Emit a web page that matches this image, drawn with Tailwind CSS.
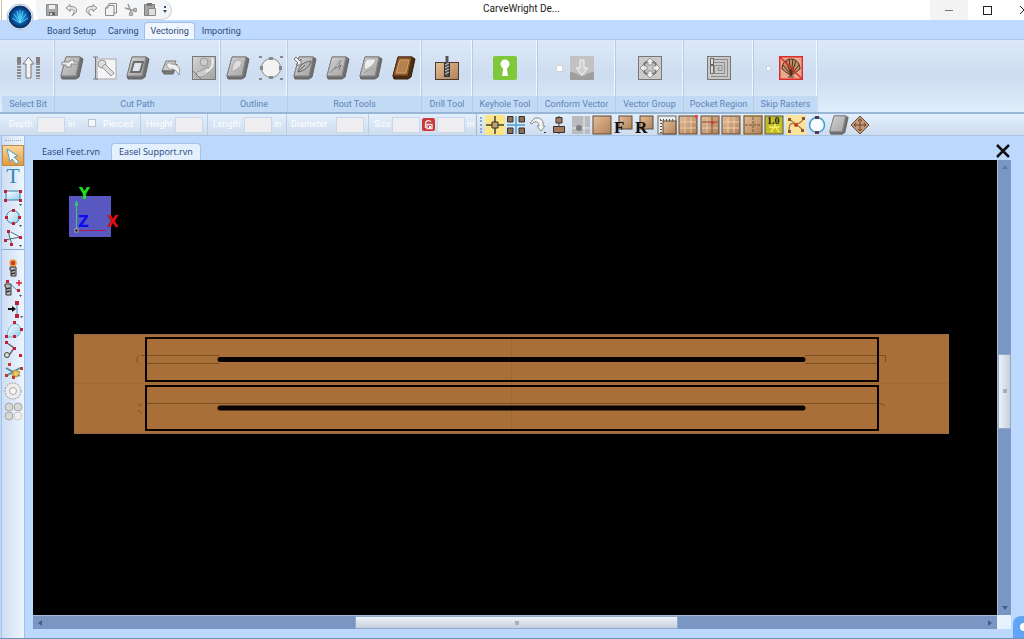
<!DOCTYPE html>
<html lang="en">
<head>
  <meta charset="UTF-8" />
  <meta name="viewport" content="width=device-width, initial-scale=1.0"/>
  <title>CarveWright Designer</title>
  <script src="https://cdn.jsdelivr.net/npm/@tailwindcss/browser@4"></script>
</head>
<body class="h-screen flex flex-col overflow-hidden bg-[#bcd8fc] font-[Roboto,'Noto_Sans',sans-serif] text-[9px] text-[#2c4a78]">

  <!-- Shared icon shapes -->
  <svg class="absolute size-0">
    <defs>
      <linearGradient id="gray" x1="0" y1="0" x2="1" y2="1"><stop offset="0" stop-color="#d4d4d4"/><stop offset="1" stop-color="#a3a3a3"/></linearGradient>
      <linearGradient id="wood" x1="0" y1="0" x2="1" y2="1"><stop offset="0" stop-color="#e4bd97"/><stop offset="1" stop-color="#b08058"/></linearGradient>
      <linearGradient id="sky" x1="0" y1="0" x2="1" y2="1"><stop offset="0" stop-color="#ffffff"/><stop offset="1" stop-color="#8fcdec"/></linearGradient>
      <radialGradient id="orb"><stop offset="0" stop-color="#22b4ee"/><stop offset="0.6" stop-color="#0a5ca8"/><stop offset="1" stop-color="#06265c"/></radialGradient>
      <g id="slab">
        <path d="M6 1H20L23 3L19 21L16 23H2L1 20Z" fill="#707070" stroke="#626262"/>
        <path d="M6 1H20L16 20H1Z" fill="url(#gray)" stroke="#858585"/>
      </g>
      <g id="board"><rect x="1" y="1" width="18" height="18" fill="url(#wood)" stroke="#5e4a3b"/></g>
    </defs>
  </svg>

  <!-- Title bar -->
  <header class="relative h-5 shrink-0 bg-white flex items-center">
    <div class="h-5 ml-9 pl-[10px] pr-1 flex items-center gap-[7px] bg-[#f4f5f6] border-r border-b border-[#d0d0d0] rounded-r-full">
      <button aria-label="Save"><svg class="w-3 h-3 block" viewBox="0 0 12 12"><path d="M0.5 0.5H11.5V11.5H0.5Z" fill="#aaa" stroke="#888"/><path d="M3 1H9V5H3Z" fill="#eee"/><path d="M3 8H9V11H3Z" fill="#666"/><path d="M4 9H6V11H4Z" fill="#ddd"/></svg></button>
      <button aria-label="Undo"><svg class="w-[13px] h-3 block" viewBox="0 0 13 12" fill="#e6e6e6" stroke="#8c8c8c"><path d="M1 4L5 0.5V2.5C13 2 14 8 7 11.5C11 7 9 5 5 5.500V7.500Z"/></svg></button>
      <button aria-label="Redo"><svg class="w-[13px] h-3 block" viewBox="0 0 13 12" fill="#e6e6e6" stroke="#8c8c8c"><path d="M12 4L8 0.5V2.500C0 2 -1 8 6 11.5C2 7 4 5 8 5.500V7.500Z"/></svg></button>
      <button aria-label="Copy"><svg class="w-3 h-[13px] block" viewBox="0 0 12 13" fill="#f2f2f2" stroke="#8c8c8c"><path d="M4 0.5H11.5V10H4Z"/><path d="M0.500 5L3 2.500H9V12.500H0.500ZM0.500 5H3V2.500"/></svg></button>
      <button aria-label="Cut"><svg class="w-[13px] h-3 block" viewBox="0 0 13 12" fill="none" stroke="#9a9a9a" stroke-width="1.500"><path d="M4 0L7 8M1 4L11 7"/><circle cx="7" cy="10" r="1.500"/><circle cx="11" cy="6" r="1.500"/></svg></button>
      <button aria-label="Paste"><svg class="w-3 h-[13px] block" viewBox="0 0 12 13"><path d="M0.500 1.500H10.500V12.500H0.500Z" fill="#a5a5a5" stroke="#7c7c7c"/><path d="M3 0H8V3H3Z" fill="#777"/><path d="M4.500 5.500H11.500V12.500H4.500Z" fill="#ddd" stroke="#888"/></svg></button>
      <button aria-label="Customize"><svg class="w-1 h-2 block" viewBox="0 0 4 8" fill="#304a78"><path d="M1 0H3V2H1ZM0 4H4L2 7Z"/></svg></button>
    </div>
    <h1 class="absolute left-[483px] top-[2px] text-[10px] leading-[14px] text-[#222]">CarveWright De...</h1>
    <div class="absolute right-0 top-0 h-full flex">
      <button class="w-[38px] bg-[#f3f3f3] flex items-center justify-center" aria-label="Minimize"><span class="w-2 h-px bg-[#777]"></span></button>
      <button class="w-[38px] flex items-center justify-center" aria-label="Maximize"><span class="size-[9px] border border-[#222]"></span></button>
      <button class="w-[18px] flex items-center justify-end overflow-hidden" aria-label="Close"><svg class="w-1 h-2" viewBox="0 0 4 8" fill="none" stroke="#222"><path d="M0 0L4 4L0 8"/></svg></button>
    </div>
    <button class="absolute left-0 top-0 z-10 w-10 h-[34px]" aria-label="Application menu">
      <svg class="w-10 h-[34px] block" viewBox="0 0 40 34">
        <path d="M3 20C3 8 8 1 20 1C30 1 35 8 38 20Z" fill="#fff"/>
        <path d="M0 1H1V20H2V0" fill="#c8c4a8"/>
        <circle cx="20" cy="17" r="13" fill="#dfe9f5" stroke="#b8c6da"/>
        <circle cx="20" cy="17" r="11" fill="url(#orb)" stroke="#123b74"/>
        <path d="M20 23L14 14M20 23L17 11M20 23V10M20 23L23 11M20 23L26 14M20 23L12 18M20 23L28 18" stroke="#6fe0ff" stroke-width="0.800" fill="none"/>
      </svg>
    </button>
  </header>

  <!-- Ribbon tabs -->
  <nav class="h-5 shrink-0 pl-[41px] flex items-end bg-[#bfdafe] border-b border-[#a6c6ea] leading-4">
    <a href="#" class="px-[6px]">Board Setup</a>
    <a href="#" class="px-[6px]">Carving</a>
    <a href="#" class="px-[5px] bg-[#eff6ff] border border-b-0 border-[#9fbfe6] rounded-t-sm">Vectoring</a>
    <a href="#" class="px-[7px]">Importing</a>
  </nav>

  <!-- Ribbon -->
  <section class="h-[74px] shrink-0 pl-[2px] flex border-b-2 border-[#98b6d6] bg-linear-to-b from-[#dde9f8] via-[#cddcf0] to-[#e0eefc] text-[#5d84bb]">
    <div class="w-[53px] flex flex-col border-r border-[#b4cbe6] shadow-[inset_-1px_0_#f0f7ff]">
      <div class="flex-1 flex items-center justify-center">
        <button aria-label="Select Bit"><svg class="w-[25px] h-6 block" viewBox="0 0 25 24"><g stroke="#8a8a8a" stroke-width="4" stroke-dasharray="2 1" fill="none"><path d="M3 1V23M22 1V23"/></g><path d="M1 1H5V7H1ZM20 1H24V7H20Z" fill="#808080"/><path d="M12.500 1L18 8H15V22H10V8H7Z" fill="#f2f2f2" stroke="#777"/></svg></button>
      </div>
      <p class="h-4 bg-[#c3daf4] text-center leading-4">Select Bit</p>
    </div>
    <div class="w-[166px] flex flex-col border-r border-[#b4cbe6] shadow-[inset_-1px_0_#f0f7ff]">
      <div class="flex-1 flex items-center justify-center gap-[9px]">
        <button aria-label="Cut path on board"><svg class="size-6 block" viewBox="0 0 24 24"><use href="#slab"/><path d="M2 6H9L11 4H14V6H18V8H11V11H6V9H2Z" fill="#ececec" stroke="#8a8a8a"/></svg></button>
        <button aria-label="Cut path depth"><svg class="size-6 block" viewBox="0 0 24 24"><rect x="4" y="3" width="19" height="20" fill="#f4f4f4" stroke="#aaa"/><path d="M0 1H5M2.500 1V23M0 23H5" stroke="#777"/><circle cx="9" cy="8" r="4" fill="#ddd" stroke="#999"/><path d="M9 11L12 8L21 17L18 20Z" fill="#ddd" stroke="#999"/></svg></button>
        <button aria-label="Cut out"><svg class="size-6 block" viewBox="0 0 24 24"><use href="#slab"/><path d="M8 6H17L14 16H5Z" fill="#dfe6ee" stroke="#6c6c6c" stroke-width="2"/></svg></button>
        <button aria-label="Cut path bend"><svg class="size-6 block" viewBox="0 0 24 24"><path d="M7 5H17L13 15H3Z" fill="#ccc" stroke="#777"/><path d="M3 15L5 18H14L18 8L13 15Z" fill="#777" stroke="#666"/><path d="M7 9L12 5V8C20 8 22 13 20 19C17 14 15 13 12 13V15Z" fill="#efefef" stroke="#999"/></svg></button>
        <button aria-label="Cut path corner"><svg class="size-6 block" viewBox="0 0 24 24"><rect x="0.500" y="0.500" width="23" height="23" fill="url(#gray)" stroke="#777"/><path d="M4 21C4 13 6 18 15 11L18 14C15 20 9 22 4 21Z" fill="#ccc" stroke="#999"/><circle cx="12" cy="6" r="4" fill="#ccc" stroke="#999"/><path d="M14 16C20 13 22 8 20 2" stroke="#eee" stroke-width="2" fill="none"/><path d="M0 14L9 23" stroke="#777"/></svg></button>
      </div>
      <p class="h-4 bg-[#c3daf4] text-center leading-4">Cut Path</p>
    </div>
    <div class="w-[67px] flex flex-col border-r border-[#b4cbe6] shadow-[inset_-1px_0_#f0f7ff]">
      <div class="flex-1 flex items-center justify-center gap-[9px]">
        <button aria-label="Outline slab"><svg class="size-6 block" viewBox="0 0 24 24"><use href="#slab"/><path d="M6 15C6 8 9 4 13 4C17 5 16 10 11 13L6 16Z" fill="#dedede" stroke="#aaa"/></svg></button>
        <button aria-label="Outline circle"><svg class="size-6 block" viewBox="0 0 24 24"><circle cx="12" cy="12" r="9.500" fill="#f3f3f3" stroke="#888"/><path d="M10 1H14V4H10ZM10 20H14V23H10ZM1 10H4V14H1ZM20 10H23V14H20ZM0 0H3V2H0ZM21 0H24V2H21ZM0 22H3V24H0ZM21 22H24V24H21Z" fill="#888"/></svg></button>
      </div>
      <p class="h-4 bg-[#c3daf4] text-center leading-4">Outline</p>
    </div>
    <div class="w-[134px] flex flex-col border-r border-[#b4cbe6] shadow-[inset_-1px_0_#f0f7ff]">
      <div class="flex-1 flex items-center justify-center gap-[9px]">
        <button aria-label="Rout leaf"><svg class="size-6 block" viewBox="0 0 24 24"><use href="#slab"/><path d="M5 16C6 9 11 6 18 5C16 11 12 15 5 16ZM5 16L12 9" fill="#b4b4b4" stroke="#666"/><path d="M1 3L3 1L7 5L8 3V9H3L5 7Z" fill="#eee" stroke="#777"/></svg></button>
        <button aria-label="Rout line"><svg class="size-6 block" viewBox="0 0 24 24"><use href="#slab"/><path d="M4 17L10 10L15 4L12 11L7 14Z" fill="#efefef" stroke="#888"/><path d="M9 12L15 9L13 14" fill="none" stroke="#777"/></svg></button>
        <button aria-label="Rout shape"><svg class="size-6 block" viewBox="0 0 24 24"><use href="#slab"/><path d="M6 14C4 9 6 3 10 3L17 3C15 10 11 11 6 14Z" fill="#eee" stroke="#aaa"/><path d="M5 17L14 12" stroke="#999"/></svg></button>
        <button aria-label="Rout board"><svg class="size-6 block" viewBox="0 0 24 24"><path d="M6 1H20L23 3L19 21L16 23H2L1 20Z" fill="#4b2c12" stroke="#382010"/><path d="M6 1H20L16 20H1Z" fill="#8b5a2b" stroke="#4b2c12"/><path d="M8 4H17L14 17H4Z" fill="#b5824f" stroke="#d0a06c"/></svg></button>
      </div>
      <p class="h-4 bg-[#c3daf4] text-center leading-4">Rout Tools</p>
    </div>
    <div class="w-[51px] flex flex-col border-r border-[#b4cbe6] shadow-[inset_-1px_0_#f0f7ff]">
      <div class="flex-1 flex items-center justify-center">
        <button aria-label="Drill Tool"><svg class="size-6 block" viewBox="0 0 24 24"><rect x="0.500" y="6.500" width="23" height="17" fill="url(#wood)" stroke="#4c3a2c"/><path d="M9 6H15V21H9Z" fill="#333"/><path d="M12 0V20" stroke="#555" stroke-width="3"/><path d="M10 9L14 7M10 12L14 10M10 15L14 13M10 18L14 16" stroke="#ccc"/></svg></button>
      </div>
      <p class="h-4 bg-[#c3daf4] text-center leading-4">Drill Tool</p>
    </div>
    <div class="w-[65px] flex flex-col border-r border-[#b4cbe6] shadow-[inset_-1px_0_#f0f7ff]">
      <div class="flex-1 flex items-center justify-center">
        <button aria-label="Keyhole Tool"><svg class="size-6 block" viewBox="0 0 24 24"><rect width="24" height="24" rx="2" fill="#7ec83c"/><circle cx="12" cy="8" r="4.500" fill="#fff"/><path d="M10.500 10H13.500L15 20H9Z" fill="#fff"/></svg></button>
      </div>
      <p class="h-4 bg-[#c3daf4] text-center leading-4">Keyhole Tool</p>
    </div>
    <div class="w-[78px] flex flex-col border-r border-[#b4cbe6] shadow-[inset_-1px_0_#f0f7ff]">
      <div class="flex-1 flex items-center justify-center gap-[7px] pr-[3px]">
        <input type="checkbox" aria-label="Conform" class="appearance-none size-[7px] bg-white border border-[#d0d4da]">
        <button aria-label="Conform Vector"><svg class="size-6 block" viewBox="0 0 24 24"><rect width="24" height="24" rx="1" fill="#c2c2c2"/><path d="M0 16C7 16 8 20 12 20C16 20 17 16 24 16V24H0Z" fill="#9e9e9e"/><path d="M10 4H14V12H18L12 19L6 12H10Z" fill="#cfcfcf" stroke="#f6f6f6"/></svg></button>
      </div>
      <p class="h-4 bg-[#c3daf4] text-center leading-4">Conform Vector</p>
    </div>
    <div class="w-[68px] flex flex-col border-r border-[#b4cbe6] shadow-[inset_-1px_0_#f0f7ff]">
      <div class="flex-1 flex items-center justify-center">
        <button aria-label="Vector Group"><svg class="size-6 block" viewBox="0 0 24 24"><rect x="0.500" y="0.500" width="23" height="23" fill="#cbcbcb" stroke="#777"/><circle cx="12" cy="12" r="7" fill="none" stroke="#777" stroke-width="2"/><path d="M12 2L16 6H14V9H10V6H8ZM12 22L8 18H10V15H14V18H16ZM2 12L6 8V10H9V14H6V16ZM22 12L18 16V14H15V10H18V8Z" fill="#eee" stroke="#777" stroke-width="0.700"/></svg></button>
      </div>
      <p class="h-4 bg-[#c3daf4] text-center leading-4">Vector Group</p>
    </div>
    <div class="w-[70px] flex flex-col border-r border-[#b4cbe6] shadow-[inset_-1px_0_#f0f7ff]">
      <div class="flex-1 flex items-center justify-center">
        <button aria-label="Pocket Region"><svg class="size-6 block" viewBox="0 0 24 24"><rect x="0.500" y="0.500" width="23" height="23" fill="#c8c8c8" stroke="#777"/><path d="M7 3.500H20.500V20.500H4M7 6.500H17.500V17.500H7.500V9.500H15V14.500H11V12H13" fill="none" stroke="#8b8b8b"/><path d="M3.500 2.500H6.500V17.500H3.500Z" fill="#ddd" stroke="#666"/><path d="M4 8H7V10H4Z" fill="#666"/></svg></button>
      </div>
      <p class="h-4 bg-[#c3daf4] text-center leading-4">Pocket Region</p>
    </div>
    <div class="w-[64px] flex flex-col border-r border-[#c8dbf0] shadow-[inset_-1px_0_#f0f7ff]">
      <div class="flex-1 flex items-center justify-center gap-[8px] pr-[2px]">
        <input type="checkbox" aria-label="Skip" class="appearance-none size-[5px] bg-white border border-[#d0d4da]">
        <button aria-label="Skip Rasters"><svg class="size-6 block" viewBox="0 0 24 24"><rect x="0.750" y="0.750" width="22.500" height="22.500" fill="#e9a98f" stroke="#dc2f2b" stroke-width="1.500"/><path d="M12 20L3 13C3 6 8 3 12 3C16 3 21 6 21 13Z" fill="#c39068" stroke="#4e2b1b"/><path d="M12 19L4 9M12 19L7 5M12 19L10 3M12 19L14 3M12 19L17 5M12 19L20 9M9 21H15" stroke="#4e2b1b" fill="none"/><path d="M1 1L23 23" stroke="#e32b2b" stroke-width="1.500"/></svg></button>
      </div>
      <p class="h-4 bg-[#c3daf4] text-center leading-4">Skip Rasters</p>
    </div>
  </section>

  <!-- Property bar -->
  <section class="h-[22px] shrink-0 flex items-center border-b border-[#a9c4e2] bg-linear-to-b from-[#e3effc] to-[#cddcee] text-white">
    <div class="ml-[2px] w-[475px] h-full pl-[7px] flex items-center border-r border-[#9db8d8]">
      <label for="depth" class="w-7">Depth</label>
      <input id="depth" type="text" class="w-7 h-4 bg-[#eeeef0] border border-[#c9d8ea]">
      <span class="w-[23px] pl-[3px]">in</span>
      <input id="pierced" type="checkbox" class="appearance-none size-2 mb-1 bg-[#f6f6f6] border border-[#b8c4d2]">
      <label for="pierced" class="w-11 pl-[7px]">Pierced</label>
      <label for="height" class="w-[35px] h-full pl-[5px] flex items-center border-l border-[#b7cde8]">Height</label>
      <input id="height" type="text" class="w-7 h-4 bg-[#eeeef0] border border-[#c9d8ea]">
      <label for="length" class="w-[37px] h-full ml-1 pl-[5px] flex items-center border-l border-[#b7cde8]">Length</label>
      <input id="length" type="text" class="w-7 h-4 bg-[#eeeef0] border border-[#c9d8ea]">
      <span class="w-[14px] pl-[2px]">in</span>
      <label for="diameter" class="w-[50px] h-full pl-[4px] flex items-center border-l border-[#b7cde8]">Diameter</label>
      <input id="diameter" type="text" class="w-7 h-4 bg-[#eeeef0] border border-[#c9d8ea]">
      <label for="size" class="w-[24px] h-full ml-1 pl-[5px] flex items-center border-l border-[#b7cde8]">Size</label>
      <input id="size" type="text" class="w-7 h-4 bg-[#eeeef0] border border-[#c9d8ea]">
      <button class="mx-[2px]" aria-label="Lock ratio"><svg class="size-[13px] block" viewBox="0 0 13 13"><rect width="13" height="13" rx="2" fill="#c9393c"/><path d="M3.500 10V6C3.500 2 8 2 9 4M5 6.500H10V10.500H5Z" fill="none" stroke="#f6dede" stroke-width="1.300"/><path d="M7 8H9V10H7Z" fill="#fff"/></svg></button>
      <input type="text" aria-label="Size height" class="w-7 h-4 bg-[#eeeef0] border border-[#c9d8ea]">
      <span class="pl-[2px]">in</span>
    </div>
    <div class="ml-[3px] h-4 border-l-2 border-dotted border-[#8ba6c8]"></div>
    <div class="ml-[3px] w-[385px] h-full flex items-center justify-between">
      <button class="bg-[#fbe585]" aria-label="Snap to center"><svg class="size-5 block" viewBox="0 0 20 20"><path d="M10 1V19M1 10H19" stroke="#3d4237" stroke-width="1.500"/><path d="M7 7H13V13H7Z" fill="#c89d69" stroke="#333"/></svg></button>
      <button aria-label="Snap to grid"><svg class="size-5 block" viewBox="0 0 20 20"><path d="M10 1V19M1 10H19" stroke="#4da2cf" stroke-width="1.500"/><path d="M1.500 1.500H7V7H1.500ZM13 1.500H18.500V7H13ZM1.500 13H7V18.500H1.500ZM13 13H18.500V18.500H13Z" fill="#8c6e57" stroke="#333"/></svg></button>
      <button aria-label="Rotate"><svg class="size-5 block" viewBox="0 0 20 20"><path d="M2 8L7 3C14 2 16 7 15 11H17L13 16L9 11H11C11 8 9 6 6 7L4 9Z" fill="#f2f2f2" stroke="#8d8d8d"/><path d="M16 17H18V18H16Z" fill="#333"/></svg></button>
      <button aria-label="Align"><svg class="size-5 block" viewBox="0 0 20 20"><path d="M10 1V19" stroke="#444"/><path d="M7 2.500H13V8H7ZM4.500 11.500H15.500V17.500H4.500Z" fill="#a67b5b" stroke="#333"/></svg></button>
      <button aria-label="Snap point"><svg class="size-5 block" viewBox="0 0 20 20"><rect x="1" y="1" width="18" height="18" fill="#b9bcbf"/><path d="M13 1V19M1 13H19" stroke="#e9e9e9"/><circle cx="8" cy="13" r="3" fill="#7d7f82"/></svg></button>
      <button aria-label="Board"><svg class="size-5 block" viewBox="0 0 20 20"><use href="#board"/></svg></button>
      <button aria-label="Front"><svg class="size-5 block" viewBox="0 0 20 20"><rect x="5" y="1" width="13" height="13" fill="url(#wood)" stroke="#5e4a3b"/><text x="0" y="18" font-family="Liberation Serif" font-weight="700" font-size="17" fill="#111">F</text></svg></button>
      <button aria-label="Rear"><svg class="size-5 block" viewBox="0 0 20 20"><rect x="5" y="1" width="13" height="13" fill="url(#wood)" stroke="#5e4a3b"/><text x="0" y="18" font-family="Liberation Serif" font-weight="700" font-size="17" fill="#111">R</text></svg></button>
      <button aria-label="Rulers"><svg class="size-5 block" viewBox="0 0 20 20"><rect x="1" y="1" width="18" height="18" fill="#ececec" stroke="#666"/><rect x="6" y="6" width="13" height="13" fill="url(#wood)" stroke="#5e4a3b"/><path d="M3 5H18" stroke="#555" stroke-width="2" stroke-dasharray="1 2"/><path d="M4 5V18" stroke="#555" stroke-width="2" stroke-dasharray="1 2"/></svg></button>
      <button aria-label="Grid origin"><svg class="size-5 block" viewBox="0 0 20 20"><use href="#board"/><path d="M7 2V18M13 2V18M2 7H18M2 13H18" stroke="#e6cba9"/><path d="M17 0H20V3H17Z" fill="#e34b4b"/></svg></button>
      <button aria-label="Grid point"><svg class="size-5 block" viewBox="0 0 20 20"><use href="#board"/><path d="M7 2V18M2 13H18" stroke="#e6cba9"/><path d="M12 2V18M2 7H18" stroke="#7c5035"/><path d="M11 6H14V9H11Z" fill="#d93838"/></svg></button>
      <button aria-label="Grid"><svg class="size-5 block" viewBox="0 0 20 20"><use href="#board"/><path d="M7 2V18M13 2V18M2 7H18M2 13H18" stroke="#ecd0b0"/></svg></button>
      <button class="bg-[#f5d26a]" aria-label="Center lines"><svg class="size-5 block" viewBox="0 0 20 20"><use href="#board"/><path d="M10 2V18M2 10H18" stroke="#765238" stroke-dasharray="3 1"/></svg></button>
      <button aria-label="Zoom 1.0"><svg class="size-5 block" viewBox="0 0 20 20"><rect x="1" y="1" width="18" height="18" fill="#c5bd28" stroke="#555"/><text x="3" y="9" font-family="Liberation Serif" font-weight="700" font-size="10" fill="#222">1.0</text><path d="M7 17L11 11L15 17M11 11V9M5 12H16" stroke="#f3ed63" stroke-width="1.500" fill="none"/></svg></button>
      <button class="bg-[#fae39c]" aria-label="Edit nodes"><svg class="size-5 block" viewBox="0 0 20 20"><path d="M3 17C3 0 11 16 18 3M3 4L11 10L17 15" stroke="#b08141" stroke-width="1.500" fill="none"/><path d="M2 3H5V6H2ZM16 2H19V5H16ZM2 15H5V18H2ZM15 14H18V17H15Z" fill="#7d5744"/><circle cx="10" cy="10" r="2" fill="#c9372a"/></svg></button>
      <button aria-label="Circle nodes"><svg class="size-5 block" viewBox="0 0 20 20"><circle cx="10" cy="10" r="7.500" fill="#f7fcff" stroke="#3e9bd1" stroke-width="1.500"/><path d="M8 1H12V4H8ZM8 16H12V19H8Z" fill="#52394f"/></svg></button>
      <button aria-label="Slab"><svg class="size-5 block" viewBox="0 0 24 24"><use href="#slab"/></svg></button>
      <button aria-label="Move"><svg class="size-5 block" viewBox="0 0 20 20"><path d="M10 1L19 10L10 19L1 10Z" fill="#c39a78" stroke="#6a4a34"/><path d="M10 5V15M5 10H15M8 6L10 4L12 6M8 14L10 16L12 14M6 8L4 10L6 12M14 8L16 10L14 12" stroke="#6b4630" fill="none"/></svg></button>
    </div>
  </section>

  <!-- Workspace -->
  <div class="flex-1 min-h-0 flex border-b border-[#6f92bd]">

    <!-- Drawing tools -->
    <aside class="w-6 ml-px mr-2 shrink-0 flex flex-col items-center border-x border-[#a3c3e6] bg-linear-to-r from-[#cfdef3] to-[#edf5fe] pt-1">
      <div class="w-4 mb-1 border-t border-dotted border-[#90add0]"></div>
      <button class="w-[22px] h-[21px] flex items-center justify-center bg-linear-to-b from-[#fbd69b] to-[#e69a32] border border-[#b98b4e]" aria-label="Select"><svg class="size-[18px] block" viewBox="0 0 18 18"><path d="M3 2L14 9L10 10L15 15L12 17L8 12L6 15Z" fill="#f3fbff" stroke="#4f9dbf"/></svg></button>
      <button class="h-5 w-full leading-5 font-['Liberation_Serif',serif] text-[22px] text-[#3489bb]">T</button>
      <button class="h-5" aria-label="Rectangle"><svg class="w-[20px] h-5 block" viewBox="0 0 20 20"><rect x="3" y="5" width="14" height="9" fill="url(#sky)" stroke="#3a7ca3"/><path d="M1 4H4V7H1ZM16 4H19V7H16ZM1 13H4V16H1ZM16 13H19V16H16Z" fill="#c01f36"/><path d="M16 18H19L17.500 20Z" fill="#356"/></svg></button>
      <button class="h-[21px]" aria-label="Circle"><svg class="size-[20px] block" viewBox="0 0 20 20"><circle cx="10" cy="10" r="6.500" fill="url(#sky)" stroke="#3a7ca3"/><path d="M9 2H12V5H9ZM9 15H12V18H9ZM2 9H5V12H2ZM15 9H18V12H15Z" fill="#c01f36"/><path d="M16 18H19L17.500 20Z" fill="#356"/></svg></button>
      <button class="h-[21px]" aria-label="Lines"><svg class="size-[20px] block" viewBox="0 0 20 20"><path d="M8 4L17 9L7 11Z" fill="#e8f6fc"/><path d="M5 3L9 17M2 12L17 9M8 4L17 9" fill="none" stroke="#4c6f83"/><path d="M4 2H7V5H4ZM16 8H19V11H16ZM1 11H4V14H1ZM7 15H10V18H7Z" fill="#c01f36"/><path d="M16 17H19L17.500 19Z" fill="#356"/></svg></button>
      <div class="w-full mt-px mb-2 border-t border-[#8aa9cf]"></div>
      <button class="h-[20px]" aria-label="Carve point"><svg class="size-[20px] block" viewBox="0 0 20 20"><circle cx="10" cy="5" r="3" fill="#c93832" stroke="#efa23c" stroke-width="1.500"/><path d="M7 9H13V18H8V12H7Z" fill="#bbb" stroke="#333"/><path d="M8 13L12 12M8 16L12 15" stroke="#333" stroke-width="1.500"/></svg></button>
      <button class="h-[20px]" aria-label="Add point"><svg class="size-[20px] block" viewBox="0 0 20 20"><path d="M2 6H8V17H3V9H2Z" fill="#bbb" stroke="#333"/><path d="M3 11L7 10M3 14L7 13" stroke="#333" stroke-width="1.500"/><path d="M5 4L15 13" stroke="#4c90b5" fill="none"/><path d="M3 2H6V5H3ZM14 11H17V14H14Z" fill="#c01f36"/><path d="M16 2V8M13 5H19" stroke="#d4243c" stroke-width="1.500"/><path d="M16 17H19L17.500 19Z" fill="#356"/></svg></button>
      <button class="h-[21px]" aria-label="Align points"><svg class="size-[20px] block" viewBox="0 0 20 20"><path d="M14 4V17" stroke="#4c90b5"/><path d="M5 10H10" stroke="#111" stroke-width="2"/><path d="M9 7L13 10L9 13Z" fill="#111"/><path d="M12 2H16V6H12ZM12 15H16V19H12Z" fill="#c01f36"/><path d="M17 17H20L18.500 19Z" fill="#356"/></svg></button>
      <button class="h-[21px]" aria-label="Arc"><svg class="size-[20px] block" viewBox="0 0 20 20"><path d="M4 17C4 5 14 -1 18 9C18 14 15 17 11 17Z" fill="url(#sky)" stroke="#79b7d9"/><path d="M10 1H13V4H10ZM17 8H20V11H17ZM2 15H5V18H2ZM10 15H13V18H10Z" fill="#c01f36"/></svg></button>
      <button class="h-[20px]" aria-label="Join"><svg class="size-[20px] block" viewBox="0 0 20 20"><path d="M4 3L11 8L7 14L3 17" stroke="#666" stroke-width="1.500" fill="none"/><circle cx="4" cy="15" r="2.500" fill="#ddd" stroke="#444"/><path d="M2 1H5V4H2ZM10 7H13V10H10ZM16 14H19V17H16Z" fill="#c01f36"/></svg></button>
      <button class="h-[21px]" aria-label="Split"><svg class="size-[20px] block" viewBox="0 0 20 20"><path d="M3 7L17 15M3 15L17 7" stroke="#4b91a0" stroke-width="2"/><path d="M11 9L17 11L14 16L9 14Z" fill="#efc25a" stroke="#b98c36"/><path d="M5 2H8V5H5ZM17 6H20V9H17ZM2 13H5V16H2ZM9 15H12V18H9Z" fill="#c03a28"/></svg></button>
      <button class="h-[20px]" aria-label="Offset"><svg class="size-[20px] block" viewBox="0 0 20 20"><circle cx="10" cy="10" r="8" fill="#ececec" stroke="#999" stroke-dasharray="2 1"/><circle cx="10" cy="10" r="3.500" fill="#f7f7f7" stroke="#aaa"/></svg></button>
      <button class="h-[20px]" aria-label="Pattern"><svg class="size-[20px] block" viewBox="0 0 20 20" fill="#d7d7d7" stroke="#a8a8a8"><circle cx="6" cy="6" r="4"/><circle cx="15" cy="6" r="4"/><circle cx="6" cy="15" r="4"/><circle cx="15" cy="15" r="4" fill="#eee" stroke="#ccc"/></svg></button>
    </aside>

    <main class="flex-1 min-w-0 flex flex-col">
      <!-- Document tabs -->
      <div class="h-6 shrink-0 flex items-end pl-[3px] pr-[14px] leading-4 font-['Open_Sans','Noto_Sans',sans-serif] text-[#23457a]">
        <a href="#" class="pl-[6px] pr-[11px]">Easel Feet.rvn</a>
        <a href="#" class="px-[7px] bg-[#e4f0fe] border border-b-0 border-[#a3c4ea] rounded-t-sm">Easel Support.rvn</a>
        <button class="ml-auto mb-[2px]" aria-label="Close document"><svg class="size-[14px] block" viewBox="0 0 14 14" stroke="#111" stroke-width="2.500"><path d="M1 1L13 13M13 1L1 13"/></svg></button>
      </div>

      <div class="flex-1 min-h-0 flex">
        <!-- Canvas -->
        <div class="flex-1 min-w-0 flex flex-col">
          <svg class="flex-1 min-h-0 w-full block bg-black" viewBox="0 0 964 455" preserveAspectRatio="xMinYMin meet">
            <!-- Axis cube -->
            <rect x="36" y="36" width="42" height="41" fill="#5858c0"/>
            <path d="M43.500 70V42M42 46L43.500 41L45 46" stroke="#3cc878" fill="none"/>
            <path d="M44 70.500H73" stroke="#b01850"/>
            <rect x="42" y="69" width="3" height="3" fill="#000" stroke="#aaa"/>
            <g font-family="DejaVu Sans" font-weight="700" font-size="15">
              <text x="46" y="39" fill="#22dd22">Y</text>
              <text x="45" y="67" fill="#0c0cf0">Z</text>
              <text x="74" y="67" fill="#e01010">X</text>
            </g>
            <!-- Board -->
            <rect x="41" y="174" width="875" height="100" fill="#a87038"/>
            <path d="M41 174.500H916M41 273.500H916M112 223.500H845" stroke="#8e6c4c"/>
            <path d="M478.500 176V272" stroke="#9c6832"/>
            <path d="M41 223.500H916" stroke="#9f6934"/>
            <path d="M186 195.500H108M106 196C103 198 103 202 106 203M112 203.500H186M772 195.500H852.500V202M846 203.500H772M112 243.500H848L852 246M109 243.500L105 246M105 250L109 253" fill="none" stroke="#7d4e22"/>
            <g fill="none" stroke="#080300" stroke-width="2">
              <rect x="113" y="178" width="732" height="43"/>
              <rect x="113" y="226" width="732" height="44"/>
            </g>
            <path d="M187 199.500H770M187 248H770" stroke="#080300" stroke-width="5" stroke-linecap="round"/>
          </svg>
          <div class="h-[14px] shrink-0 flex items-stretch bg-[#7997c2] border-t border-[#a7bcd8]">
            <button class="w-[14px] flex items-center justify-center" aria-label="Scroll left"><svg class="w-1 h-[6px]" viewBox="0 0 4 6" fill="#3f5f90"><path d="M4 0V6L0 3Z"/></svg></button>
            <div class="w-[32%]"></div>
            <div class="w-[33.5%] flex items-center justify-center bg-linear-to-b from-[#eef2f8] to-[#c5cfdd] border border-[#93a9c8]"><span class="size-1 bg-[#a5b0c0]"></span></div>
            <button class="w-[14px] ml-auto flex items-center justify-center" aria-label="Scroll right"><svg class="w-1 h-[6px]" viewBox="0 0 4 6" fill="#3f5f90"><path d="M0 0V6L4 3Z"/></svg></button>
          </div>
          <div class="h-[9px] shrink-0"></div>
        </div>

        <!-- Vertical scrollbar -->
        <div class="w-[14px] shrink-0 flex flex-col">
          <div class="flex-1 flex flex-col bg-[#7997c2] border-l border-[#a7bcd8]">
            <button class="h-[14px] flex items-center justify-center" aria-label="Scroll up"><svg class="w-[6px] h-1" viewBox="0 0 6 4" fill="#5b7aa9"><path d="M0 4H6L3 0Z"/></svg></button>
            <div class="h-[39.5%]"></div>
            <div class="h-[16.5%] flex items-center justify-center bg-linear-to-r from-[#eef2f8] to-[#c5cfdd] border border-[#93a9c8]"><span class="size-1 bg-[#a5b0c0]"></span></div>
            <button class="h-[14px] mt-auto flex items-center justify-center" aria-label="Scroll down"><svg class="w-[6px] h-1" viewBox="0 0 6 4" fill="#3f5f90"><path d="M0 0H6L3 4Z"/></svg></button>
          </div>
          <div class="h-[14px] bg-[#e6f2fe]"></div>
          <div class="h-[9px]"></div>
        </div>
        <div class="w-[13px] shrink-0 flex flex-col justify-end overflow-hidden">
          <button class="h-[22px] ml-[2px] bg-[#62a3f3] rounded-tl-lg flex items-center justify-end" aria-label="Help"><span class="w-1 h-2 bg-white rounded-l-full"></span></button>
        </div>
      </div>
    </main>
  </div>

</body>
</html>
